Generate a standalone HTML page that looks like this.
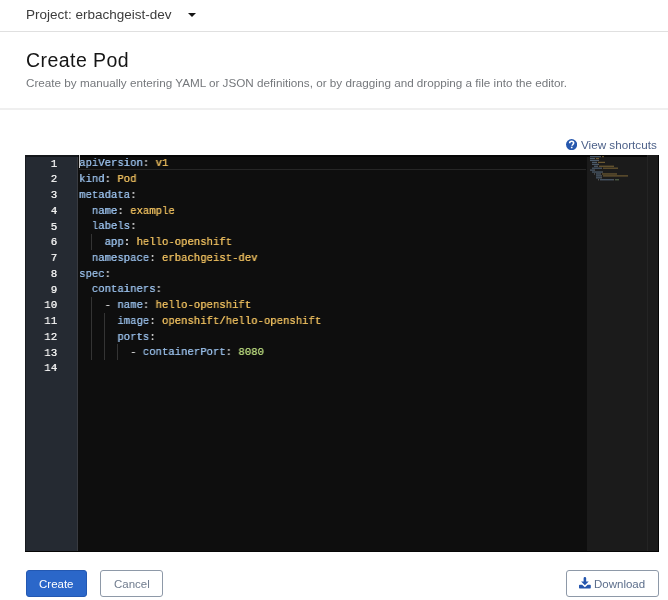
<!DOCTYPE html>
<html><head><meta charset="utf-8">
<style>
*{margin:0;padding:0;box-sizing:border-box}
html,body{width:668px;height:600px;overflow:hidden;background:#fff;font-family:"Liberation Sans",sans-serif;position:relative}
.abs{position:absolute;white-space:nowrap;will-change:transform}
.bt,.cl,.ln{will-change:transform}
#proj{left:25.5px;top:6px;font-size:13.5px;color:#3c3c3c;line-height:18px}
#caret{left:187.5px;top:12.8px;width:0;height:0;border-left:4px solid transparent;border-right:4px solid transparent;border-top:4.8px solid #151515}
.hr{position:absolute;left:0;width:668px;height:1px;background:#e0e0e0}
#title{left:26px;top:48px;font-size:19.5px;letter-spacing:0.45px;color:#151515;line-height:24px}
#desc{left:26px;top:75px;font-size:11.7px;color:#75787c;line-height:15px}
#vs{left:581px;top:137px;font-size:11.7px;color:#4d6189;line-height:15px}
#ed{left:25px;top:155px;width:634px;height:397px;background:#0e0e0e;overflow:hidden}
#gut{position:absolute;left:0;top:0;width:53px;height:397px;background:#252a32;box-shadow:inset -1px 0 #383a40}
#mini{position:absolute;left:562px;top:0;width:73px;height:397px;background:#1b1b1b}
#codebox{position:absolute;left:54px;top:0.3px;width:561px;height:397px;transform:scaleX(0.9232);transform-origin:0 0}
#lnbox{position:absolute;left:0;top:1.6px;width:54px;height:397px}
.ln{position:absolute;left:0;width:32px;text-align:right;font-family:"Liberation Mono",monospace;font-size:11px;color:#f0f0f0;line-height:15.75px;transform:scaleX(0.965);transform-origin:100% 0}
.cl{position:absolute;left:0;font-family:"Liberation Mono",monospace;font-size:11.5px;color:#9cc4e4;line-height:15.75px;white-space:pre}
.k{color:#94b9e2}.v{color:#e6b95c}.n{color:#b0cf78}.p{color:#d0d0d0}
#codebox .cl{text-shadow:0.3px 0 0 currentColor}
.ln{text-shadow:0.3px 0 0 currentColor}
.g{position:absolute;width:1px;background:#343434}
.btn{position:absolute;top:570px;height:27px;border-radius:3px}
.bt{position:absolute;top:576px;font-size:11.5px;line-height:17px;white-space:nowrap}
</style></head><body>
<div class="abs" id="proj">Project: erbachgeist-dev</div>
<div class="abs" id="caret"></div>
<div class="hr" style="top:31px"></div>
<div class="abs" id="title">Create Pod</div>
<div class="abs" id="desc">Create by manually entering YAML or JSON definitions, or by dragging and dropping a file into the editor.</div>
<div class="hr" style="top:108px;height:2px;background:#efefef"></div>
<svg class="abs" style="left:566.2px;top:138.8px" width="11.2" height="11.2" viewBox="0 0 12 12"><circle cx="6" cy="6" r="6" fill="#2657ad"/><path d="M3.9 4.6c0-1.3 1-2.1 2.2-2.1s2.1 0.8 2.1 1.9c0 1.5-1.7 1.5-1.7 2.9" fill="none" stroke="#fff" stroke-width="1.7" stroke-linecap="butt"/><rect x="5.25" y="8.3" width="1.7" height="1.6" fill="#fff"/></svg>
<div class="abs" id="vs">View shortcuts</div>
<div class="abs" id="ed">
 <div id="gut"></div>
 <div id="mini"></div>
 <div style="position:absolute;left:54px;top:14px;width:507px;height:1px;background:#262626"></div>
 <div style="position:absolute;left:53.6px;top:0;width:1.6px;height:13px;background:#c8c8c8;z-index:2"></div>
 <div class="g" style="left:66px;top:78.75px;height:15.75px"></div>
 <div class="g" style="left:66px;top:141.75px;height:63px"></div>
 <div class="g" style="left:79px;top:157.5px;height:47.25px"></div>
 <div class="g" style="left:92px;top:189px;height:15.75px"></div>
 <div id="lnbox">
<div class="ln" style="top:0.00px">1</div>
<div class="ln" style="top:15.75px">2</div>
<div class="ln" style="top:31.50px">3</div>
<div class="ln" style="top:47.25px">4</div>
<div class="ln" style="top:63.00px">5</div>
<div class="ln" style="top:78.75px">6</div>
<div class="ln" style="top:94.50px">7</div>
<div class="ln" style="top:110.25px">8</div>
<div class="ln" style="top:126.00px">9</div>
<div class="ln" style="top:141.75px">10</div>
<div class="ln" style="top:157.50px">11</div>
<div class="ln" style="top:173.25px">12</div>
<div class="ln" style="top:189.00px">13</div>
<div class="ln" style="top:204.75px">14</div>
 </div>
 <div id="codebox">
<div class="cl" style="top:0.00px"><span class="k">apiVersion</span><span class="p">: </span><span class="v">v1</span></div>
<div class="cl" style="top:15.75px"><span class="k">kind</span><span class="p">: </span><span class="v">Pod</span></div>
<div class="cl" style="top:31.50px"><span class="k">metadata</span><span class="p">:</span></div>
<div class="cl" style="top:47.25px"><span class="p">  </span><span class="k">name</span><span class="p">: </span><span class="v">example</span></div>
<div class="cl" style="top:63.00px"><span class="p">  </span><span class="k">labels</span><span class="p">:</span></div>
<div class="cl" style="top:78.75px"><span class="p">    </span><span class="k">app</span><span class="p">: </span><span class="v">hello-openshift</span></div>
<div class="cl" style="top:94.50px"><span class="p">  </span><span class="k">namespace</span><span class="p">: </span><span class="v">erbachgeist-dev</span></div>
<div class="cl" style="top:110.25px"><span class="k">spec</span><span class="p">:</span></div>
<div class="cl" style="top:126.00px"><span class="p">  </span><span class="k">containers</span><span class="p">:</span></div>
<div class="cl" style="top:141.75px"><span class="p">    - </span><span class="k">name</span><span class="p">: </span><span class="v">hello-openshift</span></div>
<div class="cl" style="top:157.50px"><span class="p">      </span><span class="k">image</span><span class="p">: </span><span class="v">openshift/hello-openshift</span></div>
<div class="cl" style="top:173.25px"><span class="p">      </span><span class="k">ports</span><span class="p">:</span></div>
<div class="cl" style="top:189.00px"><span class="p">        - </span><span class="k">containerPort</span><span class="p">: </span><span class="n">8080</span></div>
<div class="cl" style="top:204.75px"></div>
 </div>
 <div style="position:absolute;left:621.5px;top:0;width:1px;height:397px;background:#242424"></div>
 <div style="position:absolute;left:53px;top:0;width:568.5px;height:2px;background:#050505"></div>
 <div style="position:absolute;left:0;top:0;width:53px;height:1.5px;background:#14171b"></div>
 <div style="position:absolute;left:0;top:0;width:1px;height:397px;background:#181b20"></div>
 <div style="position:absolute;left:632.5px;top:0;width:1.5px;height:397px;background:#030303"></div>
 <div style="position:absolute;left:0;top:395.5px;width:634px;height:1.5px;background:#060606"></div>
</div>
<div class="btn" style="left:25.5px;width:61.3px;height:26.8px;background:#2b67c9;border:1px solid #2358b2"></div>
<svg class="abs" style="left:590px;top:156px;opacity:0.5" width="40" height="28" viewBox="0 0 40 28"><rect x="0.0" y="0.00" width="10.0" height="1.2" fill="#7f9fc0"/><rect x="10.0" y="0.00" width="1.0" height="1.2" fill="#a0a0a0"/><rect x="12.0" y="0.00" width="2.0" height="1.2" fill="#c09a48"/><rect x="0.0" y="1.93" width="4.0" height="1.2" fill="#7f9fc0"/><rect x="4.0" y="1.93" width="1.0" height="1.2" fill="#a0a0a0"/><rect x="6.0" y="1.93" width="3.0" height="1.2" fill="#c09a48"/><rect x="0.0" y="3.86" width="8.0" height="1.2" fill="#7f9fc0"/><rect x="8.0" y="3.86" width="1.0" height="1.2" fill="#a0a0a0"/><rect x="2.0" y="5.79" width="4.0" height="1.2" fill="#7f9fc0"/><rect x="6.0" y="5.79" width="1.0" height="1.2" fill="#a0a0a0"/><rect x="8.0" y="5.79" width="7.0" height="1.2" fill="#c09a48"/><rect x="2.0" y="7.72" width="6.0" height="1.2" fill="#7f9fc0"/><rect x="8.0" y="7.72" width="1.0" height="1.2" fill="#a0a0a0"/><rect x="4.0" y="9.65" width="3.0" height="1.2" fill="#7f9fc0"/><rect x="7.0" y="9.65" width="1.0" height="1.2" fill="#a0a0a0"/><rect x="9.0" y="9.65" width="15.0" height="1.2" fill="#c09a48"/><rect x="2.0" y="11.58" width="9.0" height="1.2" fill="#7f9fc0"/><rect x="11.0" y="11.58" width="1.0" height="1.2" fill="#a0a0a0"/><rect x="13.0" y="11.58" width="15.0" height="1.2" fill="#c09a48"/><rect x="0.0" y="13.51" width="4.0" height="1.2" fill="#7f9fc0"/><rect x="4.0" y="13.51" width="1.0" height="1.2" fill="#a0a0a0"/><rect x="2.0" y="15.44" width="10.0" height="1.2" fill="#7f9fc0"/><rect x="12.0" y="15.44" width="1.0" height="1.2" fill="#a0a0a0"/><rect x="4.0" y="17.37" width="1.0" height="1.2" fill="#a0a0a0"/><rect x="6.0" y="17.37" width="4.0" height="1.2" fill="#7f9fc0"/><rect x="10.0" y="17.37" width="1.0" height="1.2" fill="#a0a0a0"/><rect x="12.0" y="17.37" width="15.0" height="1.2" fill="#c09a48"/><rect x="6.0" y="19.30" width="5.0" height="1.2" fill="#7f9fc0"/><rect x="11.0" y="19.30" width="1.0" height="1.2" fill="#a0a0a0"/><rect x="13.0" y="19.30" width="25.0" height="1.2" fill="#c09a48"/><rect x="6.0" y="21.23" width="5.0" height="1.2" fill="#7f9fc0"/><rect x="11.0" y="21.23" width="1.0" height="1.2" fill="#a0a0a0"/><rect x="8.0" y="23.16" width="1.0" height="1.2" fill="#a0a0a0"/><rect x="10.0" y="23.16" width="13.0" height="1.2" fill="#7f9fc0"/><rect x="23.0" y="23.16" width="1.0" height="1.2" fill="#a0a0a0"/><rect x="25.0" y="23.16" width="4.0" height="1.2" fill="#8fb07a"/></svg>
<div class="bt" id="t1" style="left:38.7px;color:#fff">Create</div>
<div class="btn" style="left:100px;width:63px;background:#fff;border:1px solid #8e99a8"></div>
<div class="bt" id="t2" style="left:114px;color:#707c8e">Cancel</div>
<div class="btn" style="left:566px;width:93px;background:#fff;border:1px solid #8e99a8"></div>
<svg class="abs" style="left:579px;top:577.3px" width="11.8" height="11.5" viewBox="0 0 12 11.7"><path d="M4.7 1.2q0-1.2 1.3-1.2t1.3 1.2v3.3h2.6L6 8.3 2.1 4.5h2.6z" fill="#2455ad"/><path d="M0 8.6q0-0.8 0.8-0.8h2.4L6 10.4l2.8-2.6h2.4q0.8 0 0.8 0.8v2.3q0 0.8-0.8 0.8H0.8q-0.8 0-0.8-0.8z" fill="#2455ad"/></svg>
<div class="bt" id="t3" style="left:594px;color:#5d6f8c">Download</div>
</body></html>
